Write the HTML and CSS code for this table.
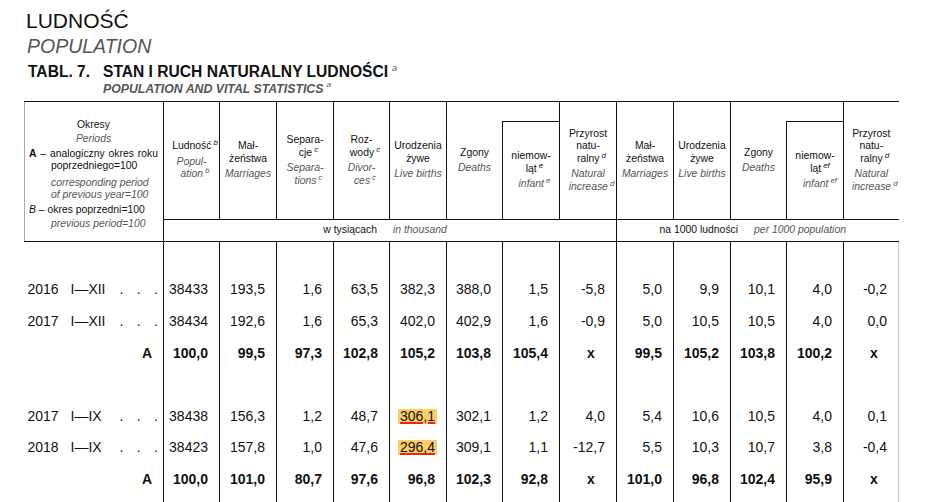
FILE: index.html
```html
<!DOCTYPE html>
<html lang="pl">
<head>
<meta charset="utf-8">
<title>Ludność – Tabl. 7</title>
<link rel="stylesheet" href="styles.css">
</head>
<body>
<div class="page">
  <h1 class="title">LUDNOŚĆ</h1>
  <div class="title-en">POPULATION</div>
  <h2 class="tabl"><span class="tabl-no">TABL. 7.</span>STAN I RUCH NATURALNY LUDNOŚCI<sup class="note">a</sup></h2>
  <div class="tabl-en">POPULATION AND VITAL STATISTICS<sup class="note">a</sup></div>

  <table class="stats">
    <colgroup>
      <col class="w139"><col class="w56"><col class="w57"><col class="w57"><col class="w56"><col class="w57"><col class="w56"><col class="w57"><col class="w57"><col class="w57"><col class="w57"><col class="w56"><col class="w57"><col class="w55">
    </colgroup>
    <thead>
      <tr class="hr1">
        <th rowspan="3" class="per">
          <div class="per-pl">Okresy</div>
          <div class="per-en">Periods</div>
          <div class="legend"><b>A</b> – analogiczny okres roku poprzedniego=100</div>
          <div class="legend-en">corresponding period<br>of previous year=100</div>
          <div class="legend legend-b"><i>B</i> – okres poprzedni=100</div>
          <div class="legend-en legend-en-b">previous period=100</div>
        </th>
        <th rowspan="2"><span class="pl">Ludność<sup class="s">b</sup></span><span class="en">Popul-<br>ation<sup class="s">b</sup></span></th>
        <th rowspan="2"><span class="pl">Mał-<br>żeństwa</span><span class="en">Marriages</span></th>
        <th rowspan="2"><span class="pl">Separa-<br>cje<sup class="s">c</sup></span><span class="en">Separa-<br>tions<sup class="s">c</sup></span></th>
        <th rowspan="2"><span class="pl">Roz-<br>wody<sup class="s">c</sup></span><span class="en">Divor-<br>ces<sup class="s">c</sup></span></th>
        <th rowspan="2"><span class="pl">Urodzenia<br>żywe</span><span class="en">Live births</span></th>
        <th rowspan="2" class="nr"><span class="pl">Zgony</span><span class="en">Deaths</span></th>
        <th class="nl gap"></th>
        <th rowspan="2"><span class="pl">Przyrost<br>natu-<br>ralny<sup class="s">d</sup></span><span class="en">Natural<br>increase<sup class="s">d</sup></span></th>
        <th rowspan="2"><span class="pl">Mał-<br>żeństwa</span><span class="en">Marriages</span></th>
        <th rowspan="2"><span class="pl">Urodzenia<br>żywe</span><span class="en">Live births</span></th>
        <th rowspan="2" class="nr"><span class="pl">Zgony</span><span class="en">Deaths</span></th>
        <th class="nl gap"></th>
        <th rowspan="2" class="last"><span class="pl">Przyrost<br>natu-<br>ralny<sup class="s">d</sup></span><span class="en">Natural<br>increase<sup class="s">d</sup></span></th>
      </tr>
      <tr class="hr2">
        <th class="inf"><span class="pl">niemow-<br>ląt<sup class="s">e</sup></span><span class="en">infant<sup class="s">e</sup></span></th>
        <th class="inf"><span class="pl">niemow-<br>ląt<sup class="s s2">ef</sup></span><span class="en">infant<sup class="s s2">ef</sup></span></th>
      </tr>
      <tr class="hr3">
        <th colspan="8" class="unit">w tysiącach<i class="unit-en">in thousand</i></th>
        <th colspan="5" class="unit last">na 1000 ludności<i class="unit-en">per 1000 population</i></th>
      </tr>
    </thead>
    <tbody>
      <tr class="blank"><td class="pd"></td><td></td><td></td><td></td><td></td><td></td><td></td><td></td><td></td><td></td><td></td><td></td><td></td><td class="last"></td></tr>
      <tr>
        <td class="pd"><div class="prd"><span class="yr">2016</span><span class="rng">I—XII</span><span class="dots"><span>.</span><span>.</span><span>.</span></span></div></td>
        <td>38433</td><td>193,5</td><td>1,6</td><td>63,5</td><td>382,3</td><td>388,0</td><td>1,5</td><td>-5,8</td><td>5,0</td><td>9,9</td><td>10,1</td><td>4,0</td><td class="last">-0,2</td>
      </tr>
      <tr>
        <td class="pd"><div class="prd"><span class="yr">2017</span><span class="rng">I—XII</span><span class="dots"><span>.</span><span>.</span><span>.</span></span></div></td>
        <td>38434</td><td>192,6</td><td>1,6</td><td>65,3</td><td>402,0</td><td>402,9</td><td>1,6</td><td>-0,9</td><td>5,0</td><td>10,5</td><td>10,5</td><td>4,0</td><td class="last">0,0</td>
      </tr>
      <tr class="idx">
        <td class="pd pa">A</td>
        <td>100,0</td><td>99,5</td><td>97,3</td><td>102,8</td><td>105,2</td><td>103,8</td><td>105,4</td><td class="x">x</td><td>99,5</td><td>105,2</td><td>103,8</td><td>100,2</td><td class="last x">x</td>
      </tr>
      <tr class="blank"><td class="pd"></td><td></td><td></td><td></td><td></td><td></td><td></td><td></td><td></td><td></td><td></td><td></td><td></td><td class="last"></td></tr>
      <tr>
        <td class="pd"><div class="prd"><span class="yr">2017</span><span class="rng">I—IX</span><span class="dots"><span>.</span><span>.</span><span>.</span></span></div></td>
        <td>38438</td><td>156,3</td><td>1,2</td><td>48,7</td><td><span class="mark">306,1</span></td><td>302,1</td><td>1,2</td><td>4,0</td><td>5,4</td><td>10,6</td><td>10,5</td><td>4,0</td><td class="last">0,1</td>
      </tr>
      <tr>
        <td class="pd"><div class="prd"><span class="yr">2018</span><span class="rng">I—IX</span><span class="dots"><span>.</span><span>.</span><span>.</span></span></div></td>
        <td>38423</td><td>157,8</td><td>1,0</td><td>47,6</td><td><span class="mark">296,4</span></td><td>309,1</td><td>1,1</td><td>-12,7</td><td>5,5</td><td>10,3</td><td>10,7</td><td>3,8</td><td class="last">-0,4</td>
      </tr>
      <tr class="idx">
        <td class="pd pa">A</td>
        <td>100,0</td><td>101,0</td><td>80,7</td><td>97,6</td><td>96,8</td><td>102,3</td><td>92,8</td><td class="x">x</td><td>101,0</td><td>96,8</td><td>102,4</td><td>95,9</td><td class="last x">x</td>
      </tr>
      <tr class="blank"><td class="pd"></td><td></td><td></td><td></td><td></td><td></td><td></td><td></td><td></td><td></td><td></td><td></td><td></td><td class="last"></td></tr>
    </tbody>
  </table>
</div>
</body>
</html>
```

FILE: styles.css
```css
html, body {
  margin: 0;
  padding: 0;
  background: #fff;
  overflow: hidden;
}

body {
  font-family: "Liberation Sans", Arial, sans-serif;
  color: #111;
}

.page {
  padding: 9px 0 0 24px;
}

.title {
  margin: 0;
  padding-left: 2px;
  font-size: 21px;
  line-height: 24px;
  font-weight: normal;
  color: #111;
}

.title-en {
  padding-left: 3px;
  font-size: 19.5px;
  line-height: 26px;
  font-style: italic;
  color: #555;
}

.tabl {
  margin: 3px 0 0;
  padding-left: 4px;
  font-size: 15.6px;
  line-height: 20px;
  font-weight: bold;
  color: #111;
}

.tabl-no {
  display: inline-block;
  width: 75px;
}

.tabl-en {
  padding-left: 79px;
  font-size: 12.3px;
  line-height: 14px;
  font-weight: bold;
  font-style: italic;
  color: #555;
}

.note {
  font-size: 9px;
  font-style: italic;
  font-weight: normal;
  vertical-align: 6px;
  line-height: 0;
  margin-left: 4px;
  color: #555;
}

.tabl-en .note {
  font-size: 8px;
  margin-left: 3px;
}

/* table */
.stats {
  margin-top: 5px;
  border-collapse: collapse;
  table-layout: fixed;
}

.w139 { width: 139px; }
.w57 { width: 57px; }
.w56 { width: 56px; }
.w55 { width: 55px; }

.stats th {
  border: 1px solid #111;
  padding: 0 2px;
  font-size: 10.4px;
  line-height: 12.5px;
  font-weight: normal;
  text-align: center;
  vertical-align: middle;
  color: #111;
}

.stats th.nr { border-right: none; }
.stats th.nl { border-left: none; }
.stats th.last { border-right: none; }

.hr1 { height: 20px; }
.hr2 { height: 98px; }
.hr3 { height: 22px; }

.pl, .en {
  display: block;
}

.en {
  margin-top: 3px;
  font-style: italic;
  color: #555;
}

.s {
  font-size: 8px;
  font-style: italic;
  vertical-align: 4px;
  line-height: 0;
  margin-left: 2px;
  margin-right: -7px;
}

.s2 { margin-right: -10px; }

/* periods header */
.stats th.per {
  border-left-color: #aaa;
  padding: 5px 5px 0 0;
  text-align: left;
  line-height: 12px;
}

.per-pl {
  text-align: center;
  padding-left: 4px;
}

.per-en {
  margin-top: 2px;
  text-align: center;
  padding-left: 4px;
  font-style: italic;
  color: #555;
}

.legend {
  margin-top: 3px;
  padding-left: 26px;
  text-indent: -22px;
  text-align: justify;
}

.legend-en {
  margin-top: 5px;
  padding-left: 26px;
  font-style: italic;
  color: #555;
}

.legend-b { margin-top: 3px; }
.legend-en-b { margin-top: 2px; }

.legend b { font-weight: bold; }
.legend i { font-style: italic; }

/* unit row */
.stats th.unit {
  padding-right: 12px;
}

.unit-en {
  margin-left: 16px;
  color: #555;
}

/* body cells */
.stats td {
  border-left: 1px solid #111;
  border-right: 1px solid #111;
  padding: 0 11px 0 0;
  height: 31.6px;
  font-size: 14px;
  text-align: right;
  vertical-align: middle;
  white-space: nowrap;
  color: #111;
}

.stats td.pd {
  border-left: none;
  padding: 0 5px 0 3px;
  text-align: left;
}

.stats td.pa {
  padding-right: 11px;
  text-align: right;
}

.stats td.last {
  border-right: 1px solid #c8c8c8;
}

.stats td.x {
  text-align: center;
  padding: 0 0 0 6px;
}

.idx td {
  font-weight: bold;
}

.prd {
  display: flex;
  align-items: baseline;
}

.yr {
  width: 43px;
}

.rng {
  width: 49px;
}

.dots {
  flex: 1;
  display: flex;
  justify-content: space-between;
}

.mark {
  display: inline-block;
  line-height: 15px;
  padding: 0 2px;
  margin-right: -2px;
  background: #fbcd62;
  text-decoration: underline;
  text-decoration-color: #e3261f;
  text-decoration-thickness: 2px;
  text-underline-offset: 1px;
}
```
